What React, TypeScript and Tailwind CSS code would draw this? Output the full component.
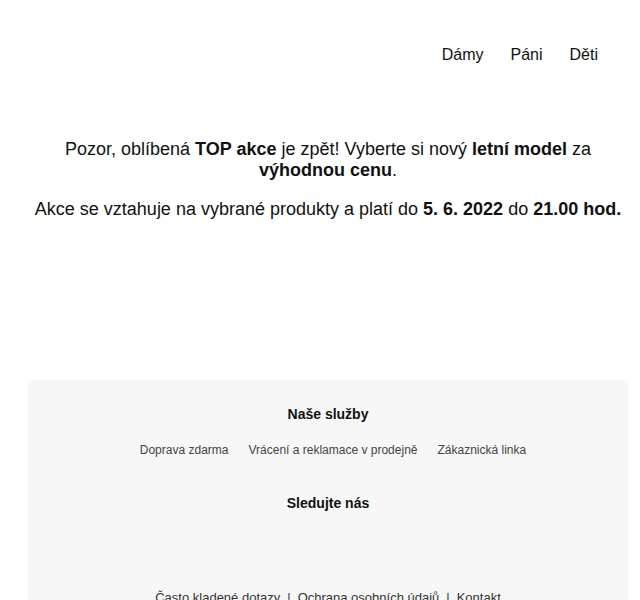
import React from 'react';

const services = ['Doprava zdarma', 'Vrácení a reklamace v prodejně', 'Zákaznická linka'];
const legal = ['Často kladené dotazy', 'Ochrana osobních údajů', 'Kontakt'];

export default function App() {
  return (
    <div className="min-h-screen bg-white">
      <div className="ml-[28px] w-[600px] text-[#111] font-['Liberation_Sans',Arial,sans-serif]">
        {/* Header nav */}
        <nav className="flex justify-end gap-[27px] pr-[30px] pt-[46px] text-[16px] leading-[18px]">
          <a href="#">Dámy</a>
          <a href="#">Páni</a>
          <a href="#">Děti</a>
        </nav>

        {/* Promo text */}
        <main className="mt-[75px] text-center text-[18px] leading-[21px] px-[6px]">
          <p className="mb-[18px]">
            Pozor, oblíbená <b>TOP akce</b> je zpět! Vyberte si nový <b>letní model</b> za <b>výhodnou cenu</b>.
          </p>
          <p>
            Akce se vztahuje na vybrané produkty a platí do <b>5. 6. 2022</b> do <b>21.00 hod.</b>
          </p>
        </main>

        {/* Footer */}
        <footer className="mt-[160px] bg-[#f7f7f7] pt-[26px] pb-6 text-center">
          <h3 className="text-[14px] leading-[16px] font-bold">Naše služby</h3>
          <ul className="mt-[21px] pl-[10px] flex justify-center gap-[20px] text-[12px] leading-[14px] text-[#444]">
            {services.map((s) => (
              <li key={s}>{s}</li>
            ))}
          </ul>
          <h3 className="mt-[38px] text-[14px] leading-[16px] font-bold">Sledujte nás</h3>
          <div className="mt-[79px] flex justify-center gap-[7px] text-[13px] leading-[15px] text-[#333]">
            {legal.map((s, i) => (
              <React.Fragment key={s}>
                {i > 0 && <span>|</span>}
                <a href="#">{s}</a>
              </React.Fragment>
            ))}
          </div>
        </footer>
      </div>
    </div>
  );
}
